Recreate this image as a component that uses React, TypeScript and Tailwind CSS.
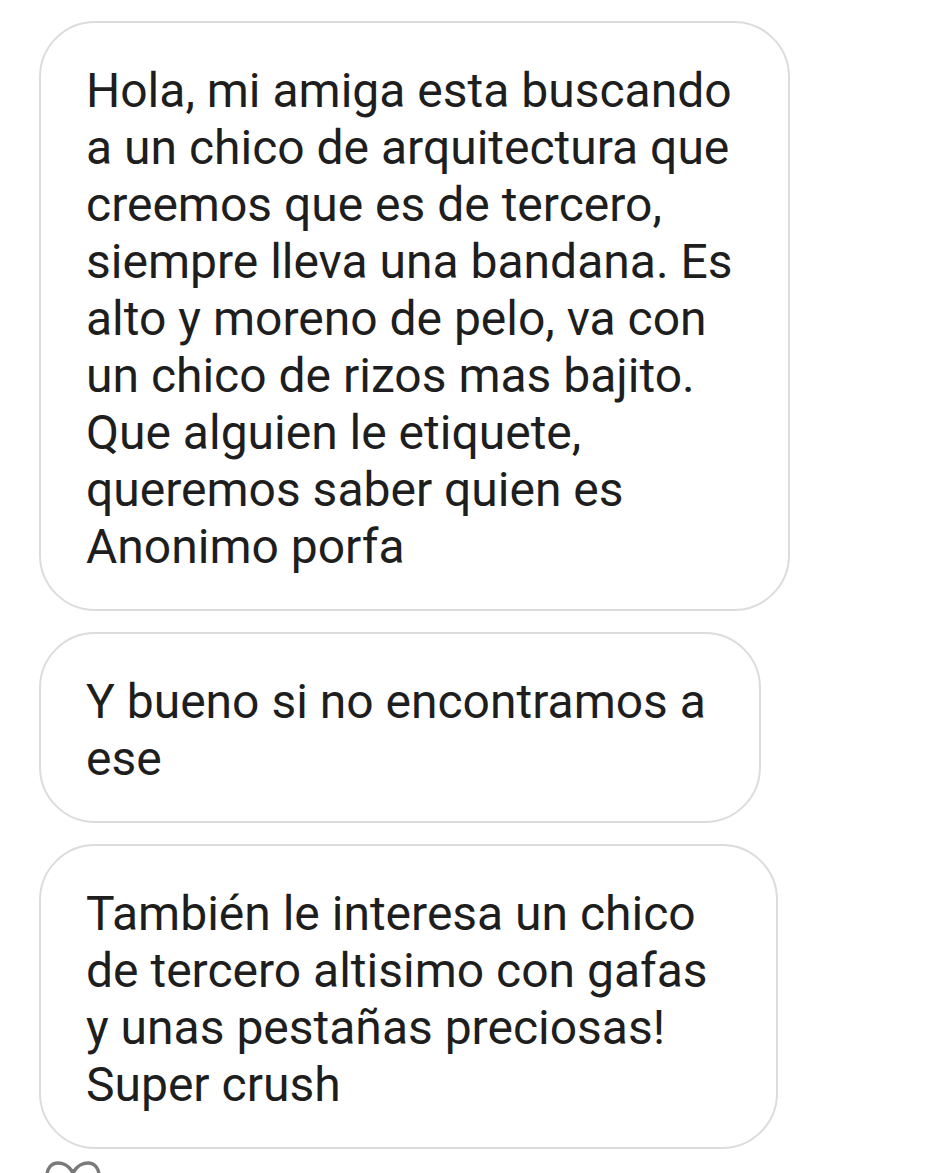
import React from "react";

const Bubble = ({ lines, width }: { lines: string[]; width: string }) => (
  <div
    className={`${width} rounded-[56px] border-2 border-[#dcdcdc] bg-white pl-[45px] pt-[39px] pb-[34px] text-[48px] leading-[57px] text-[#1e1e1e]`}
  >
    {lines.map((l, i) => (
      <div key={i} className="whitespace-nowrap">
        {l}
      </div>
    ))}
  </div>
);

export default function App() {
  return (
    <div
      className="h-[1173px] w-[938px] overflow-hidden bg-white pl-[39px] pt-[21px]"
      style={{ fontFamily: "Roboto, 'Liberation Sans', sans-serif" }}
    >
      <div className="flex flex-col gap-[21px]">
        <div className="w-[751px]">
          <Bubble
            width="w-[751px]"
            lines={[
              "Hola, mi amiga esta buscando",
              "a un chico de arquitectura que",
              "creemos que es de tercero,",
              "siempre lleva una bandana. Es",
              "alto y moreno de pelo, va con",
              "un chico de rizos mas bajito.",
              "Que alguien le etiquete,",
              "queremos saber quien es",
              "Anonimo porfa",
            ]}
          />
        </div>
        <Bubble
          width="w-[722px]"
          lines={["Y bueno si no encontramos a", "ese"]}
        />
        <Bubble
          width="w-[739px]"
          lines={[
            "También le interesa un chico",
            "de tercero altisimo con gafas",
            "y unas pestañas preciosas!",
            "Super crush",
          ]}
        />
      </div>
      <div className="mt-[12px] ml-[6px]">
        <svg width="56" height="50" viewBox="0 0 56 50" fill="none">
          <path
            d="M28 12 C24 4 17 2 13 2 C6 2 2 8 2 14 C2 28 18 38 28 47 C38 38 54 28 54 14 C54 8 50 2 43 2 C39 2 32 4 28 12 Z"
            stroke="#7a7a7a"
            strokeWidth="3.5"
            strokeLinejoin="round"
          />
        </svg>
      </div>
    </div>
  );
}
